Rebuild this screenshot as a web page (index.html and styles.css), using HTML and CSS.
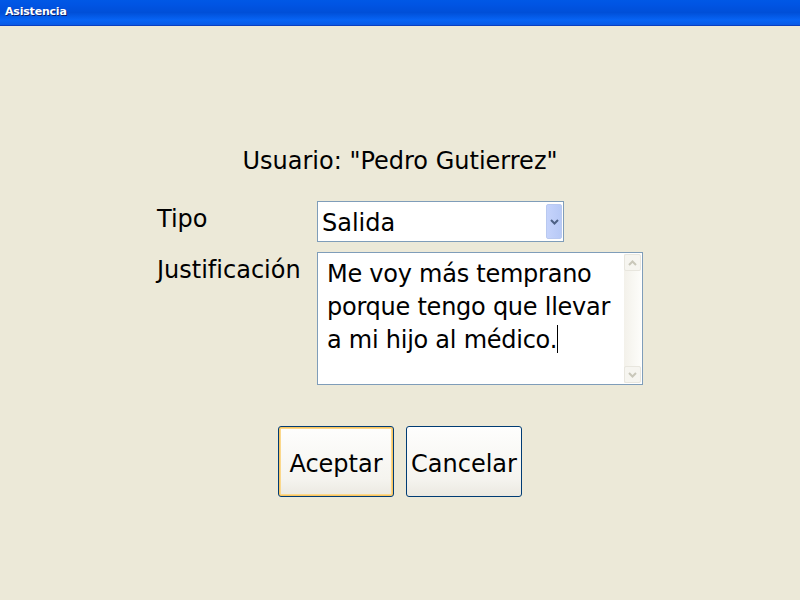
FILE: index.html
```html
<!DOCTYPE html>
<html lang="es">
<head>
<meta charset="utf-8">
<title>Asistencia</title>
<link rel="stylesheet" href="styles.css">
</head>
<body>
<div class="titlebar">Asistencia</div>
<main class="dialog">
  <p class="user">Usuario: "Pedro Gutierrez"</p>
  <div class="form">
    <label class="label">Tipo</label>
    <div class="select">
      <span class="select-value">Salida</span>
      <span class="select-btn">
        <svg width="9" height="6" viewBox="0 0 9 6"><path d="M1 1 L4.5 4.5 L8 1" fill="none" stroke="#4d6185" stroke-width="2"/></svg>
      </span>
    </div>
    <label class="label">Justificación</label>
    <div class="textarea">
      <div class="ta-text">Me voy más temprano<br>porque tengo que llevar<br>a mi hijo al médico.<span class="caret"></span></div>
      <div class="scrollbar">
        <span class="sb-btn"><svg width="9" height="6" viewBox="0 0 9 6"><path d="M1 5 L4.5 1.5 L8 5" fill="none" stroke="#c9c7ba" stroke-width="2"/></svg></span>
        <span class="sb-track"></span>
        <span class="sb-btn"><svg width="9" height="6" viewBox="0 0 9 6"><path d="M1 1 L4.5 4.5 L8 1" fill="none" stroke="#c9c7ba" stroke-width="2"/></svg></span>
      </div>
    </div>
  </div>
  <div class="buttons">
    <button class="btn btn-default">Aceptar</button>
    <button class="btn">Cancelar</button>
  </div>
</main>
</body>
</html>
```

FILE: styles.css
```css
html, body {
  margin: 0;
  padding: 0;
  background: #ece9d8;
  width: 800px;
  height: 600px;
  overflow: hidden;
  font-family: "DejaVu Sans", Tahoma, sans-serif;
  color: #000;
}

.titlebar {
  height: 26px;
  box-sizing: border-box;
  padding: 5px 0 0 5px;
  border-bottom: 1px solid #0a3fc0;
  background: linear-gradient(to bottom, #0058e6 0%, #0054e3 20%, #004fd8 50%, #0764f5 80%, #0a5ae6 100%);
  color: #fff;
  font-family: "DejaVu Sans", Tahoma, sans-serif;
  font-weight: bold;
  font-size: 11px;
  text-shadow: 1px 1px 0 #0a1e6e;
  letter-spacing: -0.2px;
}

.dialog {
  display: flex;
  flex-direction: column;
  align-items: center;
  padding-top: 120px;
}

.user {
  margin: 0;
  font-size: 24px;
  line-height: 30px;
  height: 30px;
}

.form {
  margin-top: 25px;
  display: grid;
  grid-template-columns: 160px 326px;
  row-gap: 10px;
  width: 486px;
}

.label {
  font-size: 24px;
  line-height: 30px;
  padding-top: 3px;
}

.select {
  width: 247px;
  height: 41px;
  box-sizing: border-box;
  border: 1px solid #7f9db9;
  background: #fff;
  display: flex;
  align-items: center;
  justify-content: space-between;
  padding: 2px 1px 2px 4px;
}

.select-value {
  font-size: 24px;
  line-height: 30px;
  padding-top: 3px;
}

.select-btn {
  width: 16px;
  height: 35px;
  box-sizing: border-box;
  border: 1px solid #b9c9f0;
  border-radius: 2px;
  background: linear-gradient(to right, #c5d3fb, #b7c9f6);
  display: flex;
  align-items: center;
  justify-content: center;
}

.textarea {
  width: 326px;
  height: 133px;
  box-sizing: border-box;
  border: 1px solid #7f9db9;
  background: #fff;
  display: flex;
  justify-content: space-between;
}

.ta-text {
  padding: 5px 0 0 9px;
  font-size: 24px;
  line-height: 33px;
  letter-spacing: -0.25px;
}

.caret {
  display: inline-block;
  width: 1px;
  height: 28px;
  background: #000;
  vertical-align: -5px;
}

.scrollbar {
  width: 17px;
  margin: 1px 1px 1px 0;
  background: linear-gradient(to right, #f3f1ea, #fdfdfa);
  display: flex;
  flex-direction: column;
  justify-content: space-between;
}

.sb-btn {
  height: 17px;
  box-sizing: border-box;
  border: 1px solid #e8e6de;
  border-radius: 2px;
  background: #f6f5f0;
  display: flex;
  align-items: center;
  justify-content: center;
}

.sb-track {
  flex: 1;
}

.buttons {
  margin-top: 41px;
  display: flex;
  gap: 12px;
}

.btn {
  width: 116px;
  height: 71px;
  box-sizing: border-box;
  border: 1px solid #003c74;
  border-radius: 3px;
  background: linear-gradient(to bottom, #fefefd 0%, #f5f4ef 75%, #ebe9e1 100%);
  font-family: "DejaVu Sans", Tahoma, sans-serif;
  font-size: 24px;
  color: #000;
  padding: 4px 0 0 0;
}

.btn-default {
  box-shadow: inset 0 0 0 1px #f9c561, inset 0 0 0 2px #fbd88c;
}
```
